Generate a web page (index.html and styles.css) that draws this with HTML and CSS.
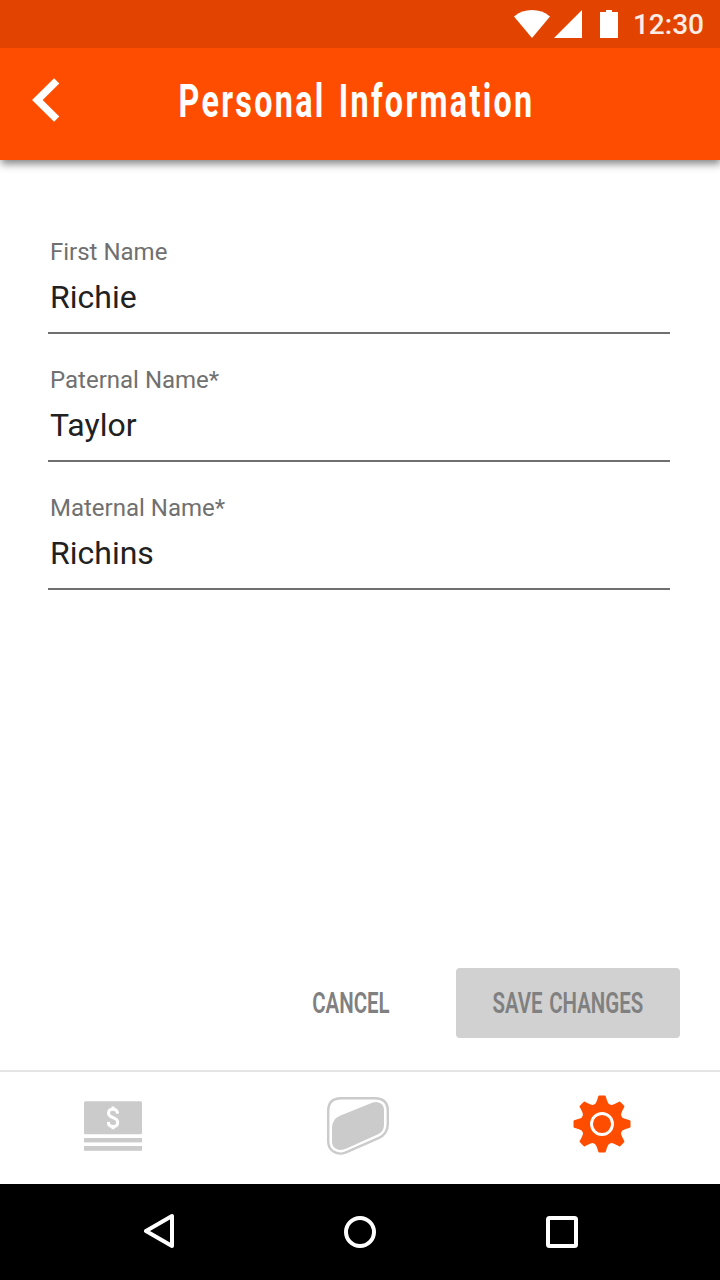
FILE: index.html
```html
<!DOCTYPE html>
<html lang="en">
<head>
<meta charset="utf-8">
<title>Personal Information</title>
<link rel="stylesheet" href="styles.css">
</head>
<body>
<div class="screen">
  <div class="status">
    <svg class="status-icons" width="106" height="28" viewBox="514 10 106 28" fill="#fff">
      <path d="M514 16.4Q522 10 532 10Q542 10 550 16.4L532 38Z"/>
      <path d="M582 10V38H554Z"/>
      <path d="M600 12H606V10H612V12H618V38H600Z"/>
    </svg>
    <span class="time">12:30</span>
  </div>
  <header class="appbar">
    <svg class="back" width="28" height="44" viewBox="32 78 28 44"><path d="M56.7 80.8L37.3 100L56.7 119.2" fill="none" stroke="#fff" stroke-width="7.4"/></svg>
    <h1 class="title"><span class="title-text">Personal Information</span></h1>
  </header>
  <main class="form">
    <label class="field"><span class="label">First Name</span><span class="value">Richie</span></label>
    <label class="field"><span class="label">Paternal Name*</span><span class="value">Taylor</span></label>
    <label class="field"><span class="label">Maternal Name*</span><span class="value">Richins</span></label>
  </main>
  <div class="actions">
    <button class="btn cancel"><span class="btn-text">CANCEL</span></button>
    <button class="btn save"><span class="btn-text">SAVE CHANGES</span></button>
  </div>
  <nav class="tabs">
    <svg class="tab-money" width="58" height="50" viewBox="84 1101 58 50">
      <g fill="#cbcbcb"><rect x="84" y="1101.2" width="58" height="33" rx="1.5"/><rect x="84" y="1138" width="58" height="4.4"/><rect x="84" y="1146" width="58" height="4.8"/></g>
      <path d="M117.6 1113.6C117.4 1110.8 115.8 1109.3 113 1109.3C110.3 1109.3 108.5 1110.8 108.5 1113.2C108.5 1118.6 117.7 1116.7 117.7 1122.3C117.7 1125 115.9 1126.6 113.1 1126.6C110.2 1126.6 108.4 1125 108.3 1121.9M113 1106.5V1110M113 1126V1129.3" fill="none" stroke="#fff" stroke-width="3"/>
    </svg>
    <svg class="tab-card" width="62" height="58" viewBox="327 1097 62 58">
      <path d="M341 1098.2H375Q387.8 1098.2 387.8 1111V1124Q387.8 1134 378.5 1138.2L346 1152.3Q339 1155.2 333.4 1151.6Q328.2 1148.2 328.2 1141V1111Q328.2 1098.2 341 1098.2Z" fill="none" stroke="#cbcbcb" stroke-width="2.4"/>
      <path d="M340.5 1115.5L372.8 1102.6Q377.5 1101 380.8 1103.6Q384 1106 384 1110V1125Q384 1131.5 377.5 1134.5L346.5 1148.5Q341 1151 336.5 1149Q332 1146.8 332 1141.5V1128Q332 1119 340.5 1115.5Z" fill="#cbcbcb"/>
    </svg>
    <svg class="tab-gear" width="58" height="58" viewBox="-29 -29 58 58">
      <g fill="#ff4d00">
        <circle r="21"/>
        <path id="tooth" d="M-8.6 -18.5Q-6.2 -20 -5.2 -23L-3.7 -27.8Q-3.5 -28.5 -2.8 -28.5H2.8Q3.5 -28.5 3.7 -27.8L5.2 -23Q6.2 -20 8.6 -18.5Z"/>
        <use href="#tooth" transform="rotate(45)"/><use href="#tooth" transform="rotate(90)"/><use href="#tooth" transform="rotate(135)"/><use href="#tooth" transform="rotate(180)"/><use href="#tooth" transform="rotate(225)"/><use href="#tooth" transform="rotate(270)"/><use href="#tooth" transform="rotate(315)"/>
      </g>
      <circle r="10.5" fill="none" stroke="#fff" stroke-width="2.9"/>
    </svg>
  </nav>
  <div class="sysnav">
    <svg class="sys-back" width="30" height="36" viewBox="144 1213 30 36"><path d="M172 1216V1246L146 1231Z" fill="none" stroke="#fff" stroke-width="4" stroke-linejoin="round"/></svg>
    <svg class="sys-home" width="32" height="32"><circle cx="16" cy="16" r="14" fill="none" stroke="#fff" stroke-width="4"/></svg>
    <svg class="sys-recent" width="32" height="32"><rect x="2" y="2" width="28" height="28" rx="1.5" fill="none" stroke="#fff" stroke-width="4"/></svg>
  </div>
</div>
</body>
</html>
```
FILE: styles.css
```css
* { box-sizing: border-box; }
body { margin: 0; font-family: Roboto, "Liberation Sans", sans-serif; background: #fff; }
svg { display: block; flex: none; }
.screen { width: 720px; height: 1280px; display: flex; flex-direction: column; overflow: hidden; }
.status { position: relative; z-index: 1; flex: none; height: 48px; background: #e24400; display: flex; align-items: center; justify-content: flex-end; padding-right: 16px; }
.time { width: 72px; margin-left: 12px; padding-top: 2px; font-size: 28px; line-height: 48px; font-weight: 460; color: #fff; opacity: .9; text-align: right; white-space: nowrap; }
.appbar { flex: none; height: 112px; background: #ff4d00; display: flex; align-items: flex-start; padding: 30px 0 0 32px; box-shadow: 1px 4px 8px 0 rgba(0,0,0,.48); }
.title { margin: -4px 0 0 118px; width: 360px; font-size: 46px; line-height: 54px; font-weight: 700; color: #fff; }
.title-text { display: inline-block; white-space: nowrap; letter-spacing: 3.3px; word-spacing: 4px; transform: translateX(.5px) scaleX(.702); transform-origin: 0 50%; }
.form { flex: 1; padding: 78px 50px 0 48px; }
.field { display: flex; flex-direction: column; height: 96px; margin-bottom: 32px; padding-left: 2px; border-bottom: 2px solid #6f6f6f; }
.label { font-size: 24px; line-height: 28px; color: #707070; }
.value { margin-top: 12px; font-size: 32px; line-height: 38px; color: #212121; }
.actions { flex: none; display: flex; justify-content: flex-end; gap: 34px; padding: 0 40px 32px; }
.btn { width: 144px; height: 70px; padding: 0; border: 0; border-radius: 4px; background: none; color: #808080; display: flex; align-items: center; justify-content: center; font: 650 29px/34px Roboto, sans-serif; }
.cancel { padding-left: 2px; }
.save { width: 224px; background: #d1d1d1; }
.btn-text { flex: none; white-space: nowrap; word-spacing: 2px; transform: scaleX(.705); }
.tabs { flex: none; height: 114px; border-top: 2px solid #e4e4e4; display: flex; padding: 23px 89px 0 84px; justify-content: space-between; }
.tab-money { margin-top: 6px; }
.tab-card { margin-top: 2px; }
.sysnav { flex: none; height: 96px; background: #000; display: flex; align-items: flex-start; justify-content: space-between; padding: 32px 142px 0 144px; }
.sys-back { margin-top: -3px; }
```
